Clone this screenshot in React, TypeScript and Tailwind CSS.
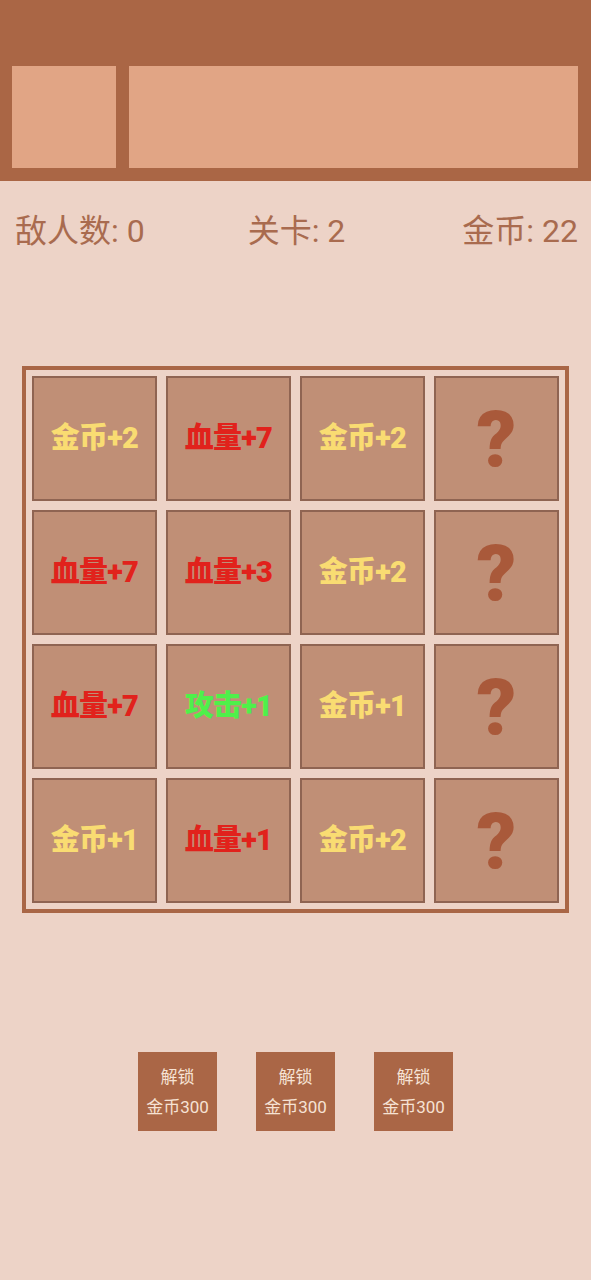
const cells: { text?: string; color?: string }[] = [
  { text: "金币+2", color: "text-[#f9dc72]" },
  { text: "血量+7", color: "text-[#e1221c]" },
  { text: "金币+2", color: "text-[#f9dc72]" },
  {},
  { text: "血量+7", color: "text-[#e1221c]" },
  { text: "血量+3", color: "text-[#e1221c]" },
  { text: "金币+2", color: "text-[#f9dc72]" },
  {},
  { text: "血量+7", color: "text-[#e1221c]" },
  { text: "攻击+1", color: "text-[#4ef04a]" },
  { text: "金币+1", color: "text-[#f9dc72]" },
  {},
  { text: "金币+1", color: "text-[#f9dc72]" },
  { text: "血量+1", color: "text-[#e1221c]" },
  { text: "金币+2", color: "text-[#f9dc72]" },
  {},
];

function Cell({ text, color }: { text?: string; color?: string }) {
  return (
    <div className="flex h-[125px] w-[125px] items-center justify-center border-2 border-[#8f6452] bg-[#c08f76]">
      {text ? (
        <span className={`text-[29px] font-black tracking-tight ${color}`}>{text}</span>
      ) : (
        <span className="mt-[4px] text-[78px] font-black leading-none text-[#a9593a]">?</span>
      )}
    </div>
  );
}

export default function App() {
  return (
    <div
      className="flex min-h-[1280px] w-[591px] flex-col bg-[#edd3c7]"
      style={{ fontFamily: "Roboto, 'Noto Sans CJK SC', sans-serif" }}
    >
      <header className="flex h-[181px] shrink-0 items-start gap-[13px] bg-[#aa6645] pl-[12px] pr-[13px] pt-[66px]">
        <div className="h-[102px] w-[104px] bg-[#e1a585]" />
        <div className="h-[102px] flex-1 bg-[#e1a585]" />
      </header>

      <div className="mt-[30px] flex items-center justify-between pl-[15px] pr-[13px] text-[32px] leading-[40px] text-[#a96b4f]">
        <span>敌人数: 0</span>
        <span className="mr-[14px]">关卡: 2</span>
        <span>金币: 22</span>
      </div>

      <div className="mx-[22px] mt-[115px] border-4 border-[#a96646] p-[6px]">
        <div className="grid grid-cols-4 gap-[9px]">
          {cells.map((c, i) => (
            <Cell key={i} text={c.text} color={c.color} />
          ))}
        </div>
      </div>

      <div className="mt-[139px] flex justify-center gap-[39px]">
        {[0, 1, 2].map((i) => (
          <div
            key={i}
            className="flex h-[79px] w-[79px] flex-col items-center justify-center gap-[6px] bg-[#aa6646] text-[17px] leading-[24px] text-[#f6e2d4]"
          >
            <span>解锁</span>
            <span>金币300</span>
          </div>
        ))}
      </div>
    </div>
  );
}
